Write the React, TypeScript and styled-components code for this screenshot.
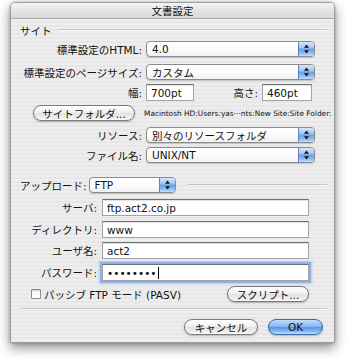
import styled, { createGlobalStyle } from 'styled-components';

const GlobalStyle = createGlobalStyle`
  html, body {
    margin: 0;
    padding: 0;
    background: #ffffff;
  }
  body {
    font-family: "DejaVu Sans", "Noto Sans CJK JP", sans-serif;
    color: #111;
  }
`;

const Stage = styled.div`
  width: 347px;
  height: 359px;
  padding: 2px 0 0 10px;
  box-sizing: border-box;
`;

const Window = styled.div`
  width: 325px;
  height: 341px;
  box-sizing: border-box;
  border: 1px solid #9c9c9c;
  border-radius: 5px 5px 1px 1px;
  overflow: hidden;
  display: flex;
  flex-direction: column;
  box-shadow: 0 5px 12px rgba(0, 0, 0, 0.45), 0 0 3px rgba(0, 0, 0, 0.25);
`;

const TitleBar = styled.div`
  height: 15px;
  flex: none;
  display: flex;
  align-items: center;
  justify-content: center;
  font-size: 10.5px;
  background: linear-gradient(#f4f4f4, #e2e2e2 60%, #d9d9d9);
  border-bottom: 1px solid #a9a9a9;
`;

const Body = styled.div`
  flex: 1;
  display: flex;
  flex-direction: column;
  padding: 4px 7px 0 9px;
  font-size: 10.5px;
  background: repeating-linear-gradient(
    #eeeeee 0px,
    #eeeeee 2px,
    #e7e7e7 2px,
    #e7e7e7 4px
  );
`;

const SectionHead = styled.div`
  display: flex;
  align-items: center;
  gap: 6px;
  height: 14px;
`;

const Groove = styled.div<{ $ml?: number }>`
  flex: 1;
  height: 1px;
  margin-left: ${(p) => p.$ml ?? 0}px;
  background: #c4c4c4;
  border-bottom: 1px solid #f8f8f8;
`;

const Row = styled.div<{ $mt: number; $label: number }>`
  display: grid;
  grid-template-columns: ${(p) => p.$label}px auto 1fr;
  align-items: center;
  column-gap: 4px;
  margin-top: ${(p) => p.$mt}px;
`;

const Label = styled.div`
  text-align: right;
  white-space: nowrap;
`;

const Popup = styled.div<{ $w: number }>`
  width: ${(p) => p.$w}px;
  height: 16px;
  box-sizing: border-box;
  display: flex;
  align-items: center;
  border: 1px solid #8b8b8b;
  border-radius: 4px;
  background: linear-gradient(#ffffff, #fafafa 60%, #f0f0f0);
  box-shadow: 0 1px 1px rgba(0, 0, 0, 0.18);
  overflow: hidden;
  padding-left: 5px;
`;

const PopupText = styled.span`
  flex: 1;
  white-space: nowrap;
`;

const PopupCap = styled.div`
  width: 15px;
  height: 100%;
  display: flex;
  align-items: center;
  justify-content: center;
  border-left: 1px solid #5d83c4;
  background: linear-gradient(
    #d6e6fb 0%,
    #a2c5f3 40%,
    #6c9fe8 52%,
    #8dbdf6 80%,
    #c3e2fd 100%
  );
`;

const Field = styled.div<{ $w: number; $focus?: boolean }>`
  width: ${(p) => p.$w}px;
  height: 17px;
  box-sizing: border-box;
  display: flex;
  align-items: center;
  padding-left: 4px;
  background: #ffffff;
  border: 1px solid #a3a3a3;
  border-top-color: #6e6e6e;
  box-shadow: ${(p) =>
    p.$focus
      ? '0 0 0 2px #8cb2e6, 0 0 2px 3px rgba(110, 160, 230, 0.45)'
      : 'inset 0 1px 1px rgba(0, 0, 0, 0.12)'};
  white-space: nowrap;
`;

const Caret = styled.span`
  display: inline-block;
  width: 1px;
  height: 12px;
  margin-left: 1px;
  background: #000;
`;

const Dims = styled.div`
  display: flex;
  align-items: center;
  width: 166px;
`;

const DimLabel = styled.span`
  margin-left: auto;
  margin-right: 4px;
`;

const Pill = styled.div<{ $w: number; $primary?: boolean }>`
  width: ${(p) => p.$w}px;
  height: 16px;
  box-sizing: border-box;
  display: flex;
  align-items: center;
  justify-content: center;
  white-space: nowrap;
  border-radius: 8px;
  border: 1px solid ${(p) => (p.$primary ? '#3f68ad' : '#7b7b7b')};
  background: ${(p) =>
    p.$primary
      ? 'linear-gradient(#c3dcfa, #8ab8f1 45%, #5a95e8 52%, #7fb6f4 80%, #bfe1ff)'
      : 'linear-gradient(#ffffff, #f1f1f1 45%, #e2e2e2 52%, #ececec 80%, #fbfbfb)'};
  box-shadow: 0 1px 2px rgba(0, 0, 0, 0.25);
`;

const FolderCell = styled.div`
  display: flex;
  justify-content: flex-end;
  padding-right: 7px;
`;

const PathText = styled.div`
  font-family: "DejaVu Sans", sans-serif;
  font-size: 7.4px;
  white-space: nowrap;
  margin-left: -2px;
`;

const UploadRow = styled.div`
  display: flex;
  align-items: center;
  margin-top: 14px;
`;

const UploadLabel = styled.span`
  margin-right: 2px;
`;

const FieldRow = styled.div<{ $mt: number }>`
  display: flex;
  align-items: center;
  margin-top: ${(p) => p.$mt}px;
`;

const FieldLabel = styled.div`
  width: 77px;
  text-align: right;
  margin-right: 5px;
  white-space: nowrap;
`;

const OptionRow = styled.div`
  display: flex;
  align-items: center;
  margin-top: 5px;
  padding-left: 11px;
  padding-right: 18px;
`;

const Check = styled.span`
  width: 10px;
  height: 10px;
  box-sizing: border-box;
  border: 1px solid #8a8a8a;
  border-radius: 1px;
  background: linear-gradient(#f4f4f4, #ffffff);
  box-shadow: inset 0 1px 1px rgba(0, 0, 0, 0.15);
  margin-right: 3px;
`;

const CheckText = styled.span`
  flex: 1;
  white-space: nowrap;
`;

const Footer = styled.div`
  display: flex;
  justify-content: flex-end;
  gap: 10px;
  margin-top: 9px;
  padding-right: 4px;
`;

const Separator = styled.div`
  height: 1px;
  margin-top: 6px;
  background: #c4c4c4;
  border-bottom: 1px solid #f8f8f8;
`;

const Arrows = () => (
  <svg width="7" height="10" viewBox="0 0 7 10">
    <path d="M3.5 0.5 L6 3.8 L1 3.8 Z" fill="#111" />
    <path d="M3.5 9.5 L6 6.2 L1 6.2 Z" fill="#111" />
  </svg>
);

const PopupButton = ({ w, value }: { w: number; value: string }) => (
  <Popup $w={w}>
    <PopupText>{value}</PopupText>
    <PopupCap>
      <Arrows />
    </PopupCap>
  </Popup>
);

export default function App() {
  return (
    <>
      <GlobalStyle />
      <Stage>
        <Window>
          <TitleBar>文書設定</TitleBar>
          <Body>
            <SectionHead>
              サイト
              <Groove />
            </SectionHead>

            <Row $mt={4} $label={122}>
              <Label>標準設定のHTML:</Label>
              <PopupButton w={169} value="4.0" />
            </Row>
            <Row $mt={7} $label={122}>
              <Label>標準設定のページサイズ:</Label>
              <PopupButton w={169} value="カスタム" />
            </Row>
            <Row $mt={4} $label={122}>
              <Label>幅:</Label>
              <Dims>
                <Field $w={48}>700pt</Field>
                <DimLabel>高さ:</DimLabel>
                <Field $w={50}>460pt</Field>
              </Dims>
            </Row>
            <Row $mt={4} $label={122}>
              <FolderCell>
                <Pill $w={102}>サイトフォルダ...</Pill>
              </FolderCell>
              <PathText>Macintosh HD:Users:yas···nts:New Site:Site Folder:</PathText>
            </Row>
            <Row $mt={6} $label={122}>
              <Label>リソース:</Label>
              <PopupButton w={169} value="別々のリソースフォルダ" />
            </Row>
            <Row $mt={4} $label={122}>
              <Label>ファイル名:</Label>
              <PopupButton w={169} value="UNIX/NT" />
            </Row>

            <UploadRow>
              <UploadLabel>アップロード:</UploadLabel>
              <PopupButton w={87} value="FTP" />
              <Groove $ml={11} />
            </UploadRow>

            <FieldRow $mt={6}>
              <FieldLabel>サーバ:</FieldLabel>
              <Field $w={207}>ftp.act2.co.jp</Field>
            </FieldRow>
            <FieldRow $mt={5}>
              <FieldLabel>ディレクトリ:</FieldLabel>
              <Field $w={207}>www</Field>
            </FieldRow>
            <FieldRow $mt={4}>
              <FieldLabel>ユーザ名:</FieldLabel>
              <Field $w={207}>act2</Field>
            </FieldRow>
            <FieldRow $mt={5}>
              <FieldLabel>パスワード:</FieldLabel>
              <Field $w={207} $focus>
                ••••••••
                <Caret />
              </Field>
            </FieldRow>

            <OptionRow>
              <Check />
              <CheckText>パッシブ FTP モード (PASV)</CheckText>
              <Pill $w={82}>スクリプト...</Pill>
            </OptionRow>

            <Separator />

            <Footer>
              <Pill $w={74}>キャンセル</Pill>
              <Pill $w={55} $primary>
                OK
              </Pill>
            </Footer>
          </Body>
        </Window>
      </Stage>
    </>
  );
}
